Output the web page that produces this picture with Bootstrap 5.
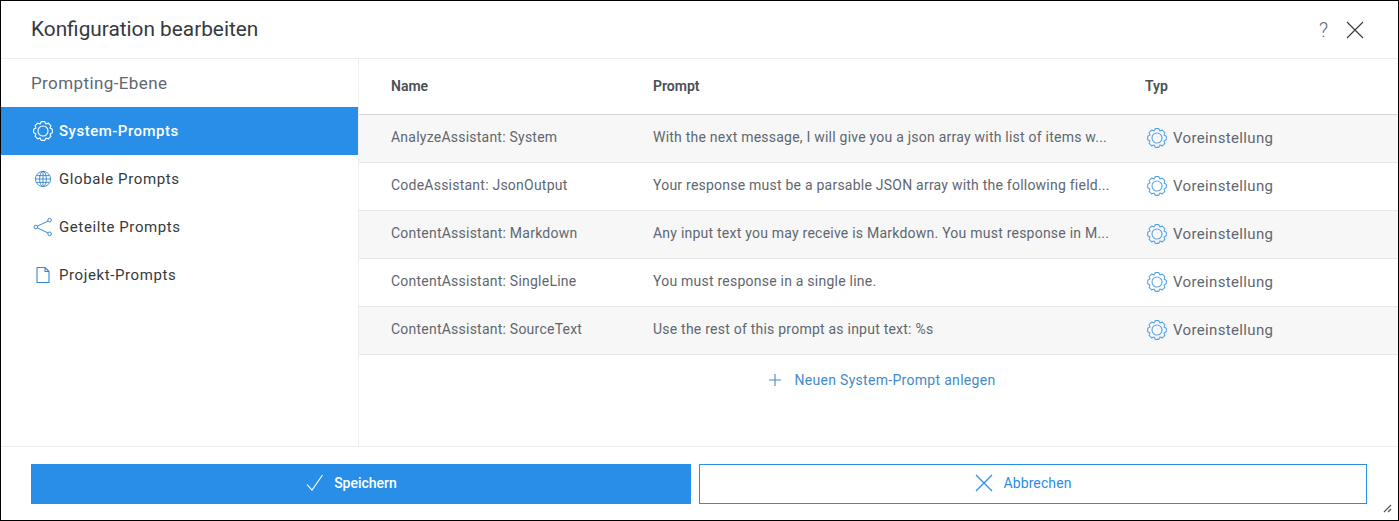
<!DOCTYPE html>
<html lang="de">
<head>
<meta charset="utf-8">
<title>Konfiguration bearbeiten</title>
<link href="https://cdn.jsdelivr.net/npm/bootstrap@5.3.0/dist/css/bootstrap.min.css" rel="stylesheet">
<style>
html,body{height:100%;margin:0;background:#fff}
body{font-family:Roboto,"Liberation Sans",sans-serif;color:#343a40;overflow:hidden}
.dlg{height:521px;border:1px solid #000;position:relative;background:#fff}
.dlg-head{height:58px;padding:0 30px;border-bottom:1px solid #eeeeee;flex:none}
.dlg-title{font-size:20.8px;font-weight:400;color:#343a40;margin:0;line-height:57px}
.dlg-tools{margin-right:4px}
.qmark{font-size:20px;font-weight:300;color:#5f6770;line-height:20px;margin-right:18px}
.dlg-main{min-height:0}
.side{width:358px;flex:none;border-right:1px solid #eeeeee}
.side-head{height:48px;padding:0 30px;font-size:17px;letter-spacing:.4px;color:#5f6770;line-height:49px}
.side-item{height:48px;padding:0 0 0 32px;font-size:15px;letter-spacing:.6px;color:#343a40;gap:6px;text-decoration:none}
.side-item.on{background:#288ee8;color:#fff;font-weight:500;letter-spacing:.5px}
.side-item svg{width:20px;height:20px;flex:none;color:#3a87c7}
.side-item.on svg{color:#fff}
.grid-wrap{min-width:0}
.ptable{table-layout:fixed;width:100%;margin:0;--bs-table-bg:transparent;font-size:14px;letter-spacing:.23px;color:#5f6770}
.ptable th{height:55px;padding:0 8px 0 32px;color:#495057;border-bottom:1px solid #d5d5d5;vertical-align:middle;letter-spacing:0;font-weight:600}
.ptable td{height:48px;padding:0 4px 2px 32px;border-bottom:1px solid #e8e8e8;vertical-align:middle;white-space:nowrap;overflow:hidden;color:#5f6770}
.ptable td.c-typ{padding:0 4px 0 34px}
.ptable tbody tr:nth-child(odd) td{background:#f7f7f7}
.c-name{width:262px}
.c-prompt{width:492px}
.typ{font-size:15px;gap:6px;letter-spacing:.35px}
.typ svg{width:20px;height:20px;color:#5aa5e0;flex:none}
.add-row{height:51px;gap:14px;color:#3f8bc9;font-size:14px;letter-spacing:.3px;text-decoration:none;padding-left:7px}
.add-row svg{width:12px;height:12px;flex:none}
.dlg-foot{height:74px;flex:none;border-top:1px solid #eeeeee;padding:17px 31px 0 30px;gap:8px}
.act{height:40px;border-radius:0;font-size:14px;flex:1 1 0;gap:11px;padding:0 20px 2px 0;letter-spacing:0;font-weight:500;width:100%}
.act svg{width:18px;height:18px;flex:none}
.act-ok{background:#288ee8;border:1px solid #288ee8;color:#fff;flex:0 0 660px}
.act-no{background:#fff;border:1px solid #288ee8;color:#288ee8;font-weight:400;letter-spacing:.1px}
.grip{position:absolute;right:6px;bottom:7px;width:9px;height:9px;color:#555}
</style>
</head>
<body>
<svg width="0" height="0" class="d-block position-absolute">
<defs>
<symbol id="gear" viewBox="0 0 20 20"><g fill="none" stroke="currentColor" stroke-width="1.1" stroke-linejoin="round"><path d="M8.19.67H11.81L12.91 2.98 15.31 2.12 17.88 4.69 17.02 7.09 19.33 8.19V11.81L17.02 12.91 17.88 15.31 15.31 17.88 12.91 17.02 11.81 19.33H8.19L7.09 17.02 4.69 17.88 2.12 15.31 2.98 12.91 .67 11.81V8.19L2.98 7.09 2.12 4.69 4.69 2.12 7.09 2.98Z"/><circle cx="10" cy="10" r="5"/></g></symbol>
</defs>
</svg>
<div class="dlg d-flex flex-column">
  <div class="dlg-head d-flex align-items-center justify-content-between">
    <h1 class="dlg-title">Konfiguration bearbeiten</h1>
    <div class="dlg-tools d-flex align-items-center">
      <span class="qmark">?</span>
      <svg width="18" height="18" viewBox="0 0 18 18"><path d="M1 1l16 16M17 1L1 17" stroke="#343a40" stroke-width="1.1" fill="none"/></svg>
    </div>
  </div>
  <div class="dlg-main d-flex flex-grow-1">
    <div class="side">
      <div class="side-head">Prompting-Ebene</div>
      <a class="side-item on d-flex align-items-center"><svg><use href="#gear"/></svg>System-Prompts</a>
      <a class="side-item d-flex align-items-center"><svg viewBox="0 0 20 20" fill="none" stroke="currentColor" stroke-width=".9"><circle cx="10" cy="10" r="7.6"/><ellipse cx="10" cy="10" rx="3.4" ry="7.6"/><path d="M10 2.4v15.2M2.4 10h15.2M3.6 6.6h12.8M3.600 13.4h12.8"/></svg>Globale Prompts</a>
      <a class="side-item d-flex align-items-center"><svg viewBox="0 0 20 20" fill="none" stroke="currentColor" stroke-width="1"><circle cx="2.8" cy="10" r="1.8"/><circle cx="16.6" cy="3.2" r="1.8"/><circle cx="16.6" cy="16.8" r="1.8"/><path d="M4.4 9.2l10.6-5.2M4.4 10.8l10.6 5.2"/></svg>Geteilte Prompts</a>
      <a class="side-item d-flex align-items-center"><svg viewBox="0 0 20 20" fill="none" stroke="currentColor" stroke-width="1.1" stroke-linejoin="round"><path d="M4 2.5h8l4 4v11H4zM12 2.5v4h4"/></svg>Projekt-Prompts</a>
    </div>
    <div class="grid-wrap flex-grow-1">
      <table class="table ptable">
        <thead><tr><th class="c-name">Name</th><th class="c-prompt">Prompt</th><th>Typ</th></tr></thead>
        <tbody>
          <tr><td>AnalyzeAssistant: System</td><td>With the next message, I will give you a json array with list of items w...</td><td class="c-typ"><div class="typ d-flex align-items-center"><svg><use href="#gear"/></svg>Voreinstellung</div></td></tr>
          <tr><td>CodeAssistant: JsonOutput</td><td>Your response must be a parsable JSON array with the following field...</td><td class="c-typ"><div class="typ d-flex align-items-center"><svg><use href="#gear"/></svg>Voreinstellung</div></td></tr>
          <tr><td>ContentAssistant: Markdown</td><td>Any input text you may receive is Markdown. You must response in M...</td><td class="c-typ"><div class="typ d-flex align-items-center"><svg><use href="#gear"/></svg>Voreinstellung</div></td></tr>
          <tr><td>ContentAssistant: SingleLine</td><td>You must response in a single line.</td><td class="c-typ"><div class="typ d-flex align-items-center"><svg><use href="#gear"/></svg>Voreinstellung</div></td></tr>
          <tr><td>ContentAssistant: SourceText</td><td>Use the rest of this prompt as input text: %s</td><td class="c-typ"><div class="typ d-flex align-items-center"><svg><use href="#gear"/></svg>Voreinstellung</div></td></tr>
        </tbody>
      </table>
      <a class="add-row d-flex align-items-center justify-content-center"><svg viewBox="0 0 12 12"><path d="M6 0v12M0 6h12" stroke="currentColor" stroke-width="1.1"/></svg>Neuen System-Prompt anlegen</a>
    </div>
  </div>
  <div class="dlg-foot d-flex">
    <button class="btn act act-ok d-flex align-items-center justify-content-center"><svg viewBox="0 0 18 18"><path d="M2 10.5l5 5.500L17.500 1" stroke="currentColor" stroke-width="1.1" fill="none"/></svg>Speichern</button>
    <button class="btn act act-no d-flex align-items-center justify-content-center"><svg viewBox="0 0 18 18"><path d="M1 1l16 16M17 1L1 17" stroke="currentColor" stroke-width="1.2" fill="none"/></svg>Abbrechen</button>
  </div>
  <svg class="grip" viewBox="0 0 9 9"><path d="M1 8l7-7M5 8l3-3" stroke="currentColor" stroke-width="1.2" fill="none"/></svg>
</div>
<script src="https://cdn.jsdelivr.net/npm/bootstrap@5.3.0/dist/js/bootstrap.bundle.min.js"></script>
</body>
</html>
